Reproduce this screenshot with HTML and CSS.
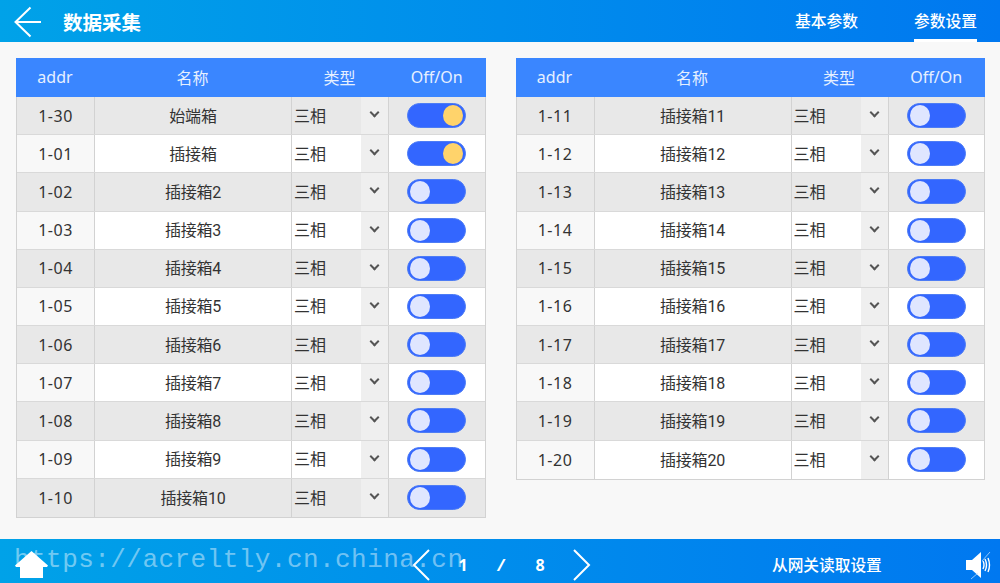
FILE: index.html
```html
<!DOCTYPE html>
<html lang="zh-CN">
<head>
    <meta charset="UTF-8">
    <title>数据采集</title>
    <link rel="stylesheet" href="styles.css">
</head>
<body>
    <header class="top-bar">
        <svg class="back-icon" width="28" height="32" viewBox="0 0 28 32"><path d="M16.5 1.5 1.5 16l15 14.5M1.5 16H27" fill="none" stroke="#fff" stroke-width="2"/></svg>
        <h1 class="page-title">数据采集</h1>
        <nav class="tabs">
            <a class="tab">基本参数</a>
            <a class="tab active">参数设置</a>
        </nav>
    </header>

    <main class="content">
        <!-- 左侧表格 -->
        <section class="panel">
            <div class="row head"><div>addr</div><div>名称</div><div>类型</div><div>Off/On</div></div>
            <div class="row"><div>1-30</div><div>始端箱</div><div class="type"><span class="type-name">三相</span><span class="arrow"></span></div><div><span class="toggle on"></span></div></div>
            <div class="row"><div>1-01</div><div>插接箱</div><div class="type"><span class="type-name">三相</span><span class="arrow"></span></div><div><span class="toggle on"></span></div></div>
            <div class="row"><div>1-02</div><div>插接箱2</div><div class="type"><span class="type-name">三相</span><span class="arrow"></span></div><div><span class="toggle"></span></div></div>
            <div class="row"><div>1-03</div><div>插接箱3</div><div class="type"><span class="type-name">三相</span><span class="arrow"></span></div><div><span class="toggle"></span></div></div>
            <div class="row"><div>1-04</div><div>插接箱4</div><div class="type"><span class="type-name">三相</span><span class="arrow"></span></div><div><span class="toggle"></span></div></div>
            <div class="row"><div>1-05</div><div>插接箱5</div><div class="type"><span class="type-name">三相</span><span class="arrow"></span></div><div><span class="toggle"></span></div></div>
            <div class="row"><div>1-06</div><div>插接箱6</div><div class="type"><span class="type-name">三相</span><span class="arrow"></span></div><div><span class="toggle"></span></div></div>
            <div class="row"><div>1-07</div><div>插接箱7</div><div class="type"><span class="type-name">三相</span><span class="arrow"></span></div><div><span class="toggle"></span></div></div>
            <div class="row"><div>1-08</div><div>插接箱8</div><div class="type"><span class="type-name">三相</span><span class="arrow"></span></div><div><span class="toggle"></span></div></div>
            <div class="row"><div>1-09</div><div>插接箱9</div><div class="type"><span class="type-name">三相</span><span class="arrow"></span></div><div><span class="toggle"></span></div></div>
            <div class="row"><div>1-10</div><div>插接箱10</div><div class="type"><span class="type-name">三相</span><span class="arrow"></span></div><div><span class="toggle"></span></div></div>
        </section>

        <!-- 右侧表格 -->
        <section class="panel">
            <div class="row head"><div>addr</div><div>名称</div><div>类型</div><div>Off/On</div></div>
            <div class="row"><div>1-11</div><div>插接箱11</div><div class="type"><span class="type-name">三相</span><span class="arrow"></span></div><div><span class="toggle"></span></div></div>
            <div class="row"><div>1-12</div><div>插接箱12</div><div class="type"><span class="type-name">三相</span><span class="arrow"></span></div><div><span class="toggle"></span></div></div>
            <div class="row"><div>1-13</div><div>插接箱13</div><div class="type"><span class="type-name">三相</span><span class="arrow"></span></div><div><span class="toggle"></span></div></div>
            <div class="row"><div>1-14</div><div>插接箱14</div><div class="type"><span class="type-name">三相</span><span class="arrow"></span></div><div><span class="toggle"></span></div></div>
            <div class="row"><div>1-15</div><div>插接箱15</div><div class="type"><span class="type-name">三相</span><span class="arrow"></span></div><div><span class="toggle"></span></div></div>
            <div class="row"><div>1-16</div><div>插接箱16</div><div class="type"><span class="type-name">三相</span><span class="arrow"></span></div><div><span class="toggle"></span></div></div>
            <div class="row"><div>1-17</div><div>插接箱17</div><div class="type"><span class="type-name">三相</span><span class="arrow"></span></div><div><span class="toggle"></span></div></div>
            <div class="row"><div>1-18</div><div>插接箱18</div><div class="type"><span class="type-name">三相</span><span class="arrow"></span></div><div><span class="toggle"></span></div></div>
            <div class="row"><div>1-19</div><div>插接箱19</div><div class="type"><span class="type-name">三相</span><span class="arrow"></span></div><div><span class="toggle"></span></div></div>
            <div class="row"><div>1-20</div><div>插接箱20</div><div class="type"><span class="type-name">三相</span><span class="arrow"></span></div><div><span class="toggle"></span></div></div>
        </section>
    </main>

    <footer class="bottom-bar">
        <svg class="home-icon" width="33" height="27" viewBox="0 0 33 27"><path d="M16.5 0 33 14.5l-1 1.5h-4v11H5V16H1l-1-1.500z" fill="#fff"/></svg>
        <div class="pager">
            <svg width="18" height="32" viewBox="0 0 18 32"><path d="M17 1 2 16l15 15" fill="none" stroke="#fff" stroke-width="2"/></svg>
            <span class="page-num">1</span>
            <span class="page-sep">/</span>
            <span class="page-num">8</span>
            <svg width="18" height="32" viewBox="0 0 18 32"><path d="M1 1l15 15L1 31" fill="none" stroke="#fff" stroke-width="2"/></svg>
        </div>
        <a class="read-btn">从网关读取设置</a>
        <svg class="sound-icon" width="26" height="30" viewBox="0 0 26 30"><path d="M1 10h6l9-8v26l-9-8H1z" fill="#fff"/><path d="M18 11q2 4 0 8M20 9q3 6 0 12M23 8q3 7 0 14" fill="none" stroke="#fff" stroke-width="1.400"/><path d="M25 2 17 11M13 23l-7 6" stroke="#cfe6ff" stroke-width=".7"/></svg>
        <div class="watermark">https://acreltly.cn.china.cn</div>
    </footer>
</body>
</html>
```

FILE: styles.css
```css
* {
    margin: 0;
    padding: 0;
    box-sizing: border-box;
}

body {
    width: 1000px;
    height: 583px;
    overflow: hidden;
    display: flex;
    flex-direction: column;
    background-color: #f8f8f8;
    color: #333;
    font-family: "Noto Sans", "Noto Sans CJK SC", sans-serif;
    font-size: 16px;
}

/* 顶部栏 */
.top-bar {
    height: 42px;
    display: flex;
    align-items: center;
    padding-left: 14px;
    color: #fff;
    background: linear-gradient(90deg, #00a2e8, #0078f0);
}

.back-icon {
    margin-top: 2px;
    margin-right: 21px;
}

.page-title {
    font-size: 19.5px;
    font-weight: 700;
}

.tabs {
    margin-left: auto;
    margin-right: 23px;
    height: 42px;
    display: flex;
    gap: 56px;
}

.tab {
    width: 63px;
    line-height: 42px;
    font-size: 15.75px;
    font-weight: 500;
    text-align: center;
    white-space: nowrap;
}

.tab.active {
    border-bottom: 3px solid #fff;
}

/* 表格 */
.content {
    flex: 1;
    display: flex;
    align-items: flex-start;
    gap: 30px;
    padding: 16px 15px 0 16px;
}

.panel {
    width: 469.500px;
    border: solid #d2d2d2;
    border-width: 0 1px 1px;
}

.row {
    height: 38.18px;
    display: grid;
    grid-template-columns: 78px 197px 97px 1fr;
    background-color: #fff;
    border-bottom: 1px solid #d9d9d9;
}

.row:nth-child(even) {
    background-color: #e8e8e8;
}

.row:last-child {
    border-bottom: none;
}

.row > div {
    display: flex;
    align-items: center;
    justify-content: center;
    border-right: 1px solid #d2d2d2;
}

.row > div:first-child {
    letter-spacing: 0.5px;
}

.row > div:nth-child(2) {
    padding-bottom: 2px;
    font-family: Roboto, "Noto Sans CJK SC", sans-serif;
    letter-spacing: -0.2px;
}

.row > div:last-child {
    border-right: none;
}

.row:nth-child(odd):not(.head) > div:first-child {
    background-color: #f8f8f8;
}

.row.head {
    height: 39px;
    padding-bottom: 1px;
    margin: 0 -1px;
    background-color: #3a86ff;
    border-bottom: none;
    color: #e6f0ff;
}

.row.head > div {
    border-right: none;
    letter-spacing: 0;
}

.row.head > div:nth-child(2) {
    padding-bottom: 0;
}

.row > .type {
    justify-content: flex-start;
    padding-left: 2px;
}

.type-name {
    padding-bottom: 2px;
}

.arrow {
    align-self: stretch;
    width: 27px;
    margin-left: auto;
    background-color: #efefef;
    position: relative;
}

.arrow::after {
    content: "";
    position: absolute;
    top: 12px;
    left: 10px;
    width: 5px;
    height: 5px;
    border: solid #555;
    border-width: 0 2px 2px 0;
    transform: rotate(45deg);
}

/* 开关 */
.toggle {
    width: 59px;
    height: 25px;
    display: flex;
    align-items: center;
    padding: 0 2px;
    background-color: #3366ff;
    border: 1px solid #4d7cf5;
    border-radius: 13px;
}

.toggle::after {
    content: "";
    width: 20px;
    height: 21px;
    border-radius: 50%;
    background-color: #dfe6ff;
}

.toggle.on {
    justify-content: flex-end;
}

.toggle.on::after {
    background-color: #ffd36b;
}

/* 底部栏 */
.bottom-bar {
    position: relative;
    height: 44px;
    padding-top: 7px;
    display: flex;
    align-items: center;
    color: #fff;
    background: linear-gradient(90deg, #00a2e8, #0078f0);
}

.home-icon {
    margin-left: 15px;
}

.pager {
    margin-left: 364px;
    display: flex;
    align-items: center;
    font-size: 16px;
    font-weight: 700;
}

.page-num {
    width: 12px;
    text-align: center;
}

.pager svg:first-child {
    margin-right: 27px;
}

.pager svg:last-child {
    margin-left: 27px;
}

.page-sep {
    width: 10px;
    margin: 0 28px 0 27px;
    font-style: italic;
    text-align: center;
}

.read-btn {
    margin-left: 181px;
    font-size: 15.7px;
    font-weight: 500;
    white-space: nowrap;
}

.sound-icon {
    margin-left: auto;
    margin-right: 9px;
}

.watermark {
    position: absolute;
    left: 14px;
    top: 6px;
    font-family: "Liberation Mono", monospace;
    font-size: 26px;
    letter-spacing: 0.45px;
    color: rgba(255, 255, 255, 0.45);
    white-space: nowrap;
}
```
